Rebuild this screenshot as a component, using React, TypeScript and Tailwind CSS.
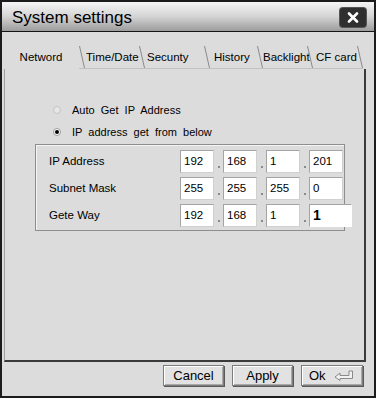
const tabs = [
  { label: "Netword", w: "w-[76px]", pad: "justify-center", active: true },
  { label: "Time/Date", w: "w-[54px]", pad: "pl-[1px]" },
  { label: "Secunty", w: "w-[59px]", pad: "pl-[2px]" },
  { label: "History", w: "w-[47px]", pad: "pl-[4px]" },
  { label: "Backlight", w: "w-[44px]", pad: "pl-0" },
  { label: "CF card", w: "w-[44px]", pad: "pl-[3px]" },
];

const rows = [
  { label: "IP Address", values: ["192", "168", "1", "201"] },
  { label: "Subnet Mask", values: ["255", "255", "255", "0"] },
  { label: "Gete Way", values: ["192", "168", "1", "1"], focusLast: true },
];

function Slant() {
  return (
    <svg width="6" height="22" viewBox="0 0 6 22" className="shrink-0">
      <line x1="0.5" y1="0" x2="5.5" y2="22" stroke="#8a8a8a" strokeWidth="1" />
    </svg>
  );
}

function Radio({ checked }: { checked?: boolean }) {
  return (
    <span
      className={`flex h-[8px] w-[8px] items-center justify-center rounded-full border ${
        checked ? "border-[#9a9a9a] bg-white" : "border-[#c4c4c4] bg-[#e6e6e6]"
      }`}
    >
      {checked && <span className="h-[4px] w-[4px] rounded-full bg-black" />}
    </span>
  );
}

function Field({ value, focus }: { value: string; focus?: boolean }) {
  return (
    <div
      className={`flex h-full shrink-0 items-center border border-[#d0d0d0] border-l-[#a4a4a4] border-t-[#a4a4a4] bg-white pl-[3px] ${
        focus ? "w-[43px] border-r-white border-b-white text-[14px] font-bold" : "w-[34px]"
      }`}
    >
      {value}
    </div>
  );
}

function Dot() {
  return (
    <div className="flex h-full w-[9px] shrink-0 items-end justify-center pb-[5px]">
      <span className="h-[2px] w-[2px] bg-[#8a8a8a]" />
    </div>
  );
}

function Btn({ children, className = "" }: { children: React.ReactNode; className?: string }) {
  return (
    <button
      type="button"
      className={`flex h-[21px] w-[61px] items-center border border-[#7c7c7c] bg-[#e2e2e2] text-[13px] shadow-[inset_1px_1px_0_#ffffff,inset_-1px_-1px_0_#a8a8a8,1px_1px_0_#5a5a5a] ${className}`}
    >
      {children}
    </button>
  );
}

export default function App() {
  return (
    <div className="flex h-[398px] w-[376px] flex-col overflow-hidden border-2 border-[#1c1c1c] bg-[#dcdcdc] font-['Liberation_Sans',Arial,sans-serif] text-black">
      {/* title bar */}
      <div className="flex h-[30px] shrink-0 items-center justify-between border-b border-[#151515] bg-gradient-to-b from-[#f6f6f6] via-[#d4d4d4] to-[#9c9c9c] pl-[10px] pr-[8px]">
        <span className="pt-[2px] text-[17px] leading-none">System settings</span>
        <button
          type="button"
          className="mt-[1px] flex h-[19px] w-[26px] items-center justify-center rounded-[3px] bg-[#2f2f2f] shadow-[0_0_0_1px_#555]"
        >
          <svg width="12" height="11" viewBox="0 0 12 11">
            <path d="M2 1.5 L10 9.5 M10 1.5 L2 9.5" stroke="#fff" strokeWidth="2.6" strokeLinecap="round" />
          </svg>
        </button>
      </div>

      {/* tabs */}
      <div className="flex h-[37px] shrink-0 items-end pl-[1px] text-[11.5px]">
        {tabs.map((t, i) => (
          <div key={t.label} className="flex items-end">
            {i > 0 && (
              <div className="border-b border-[#c2c2c2]">
                <Slant />
              </div>
            )}
            <div
              className={`flex h-[22px] items-center ${t.w} ${t.pad} ${
                t.active ? "" : "border-b border-[#c2c2c2]"
              }`}
            >
              {t.label}
            </div>
          </div>
        ))}
        <div className="border-b border-[#c2c2c2]">
          <Slant />
        </div>
      </div>

      {/* panel */}
      <div className="ml-[2px] h-[293px] w-[362px] shrink-0 border-b-2 border-l border-r-2 border-b-[#3a3a3a] border-l-[#a0a0a0] border-r-[#3a3a3a] pt-[30px]">
        <div className="flex h-[22px] items-center pl-[48px] text-[11px]">
          <Radio />
          <span className="ml-[11px] whitespace-pre">Auto  Get  IP  Address</span>
        </div>
        <div className="flex h-[22px] items-center pl-[48px] text-[11px]">
          <Radio checked />
          <span className="ml-[11px] whitespace-pre">IP  address  get  from  below</span>
        </div>

        <div className="ml-[30px] mt-[1px] flex w-[310px] flex-col gap-[4px] border border-[#8e8e8e] pb-[3px] pt-[5px] text-[11.5px] shadow-[inset_1px_1px_0_#f4f4f4]">
          {rows.map((r) => (
            <div key={r.label} className="flex h-[23px] items-center">
              <span className="w-[144px] shrink-0 pl-[13px]">{r.label}</span>
              <div className="flex h-full shrink-0 items-stretch">
                {r.values.map((v, i) => (
                  <div key={i} className="flex h-full shrink-0">
                    {i > 0 && <Dot />}
                    <Field value={v} focus={r.focusLast && i === 3} />
                  </div>
                ))}
              </div>
            </div>
          ))}
        </div>
      </div>

      {/* buttons */}
      <div className="flex justify-end gap-[8px] pr-[11px] pt-[3px]">
        <Btn className="justify-center">Cancel</Btn>
        <Btn className="justify-center">Apply</Btn>
        <Btn className="w-[62px] pl-[7px]">
          <span>Ok</span>
          <svg width="20" height="11" viewBox="0 0 20 11" className="ml-[8px]">
            <path
              d="M1 7 L6 3 L6 5.5 L15 5.5 L15 1 L18.5 1 L18.5 8.5 L6 8.5 L6 10.5 Z"
              fill="#f2f2f2"
              stroke="#8a8a8a"
              strokeWidth="1"
              strokeLinejoin="round"
            />
          </svg>
        </Btn>
      </div>
    </div>
  );
}
